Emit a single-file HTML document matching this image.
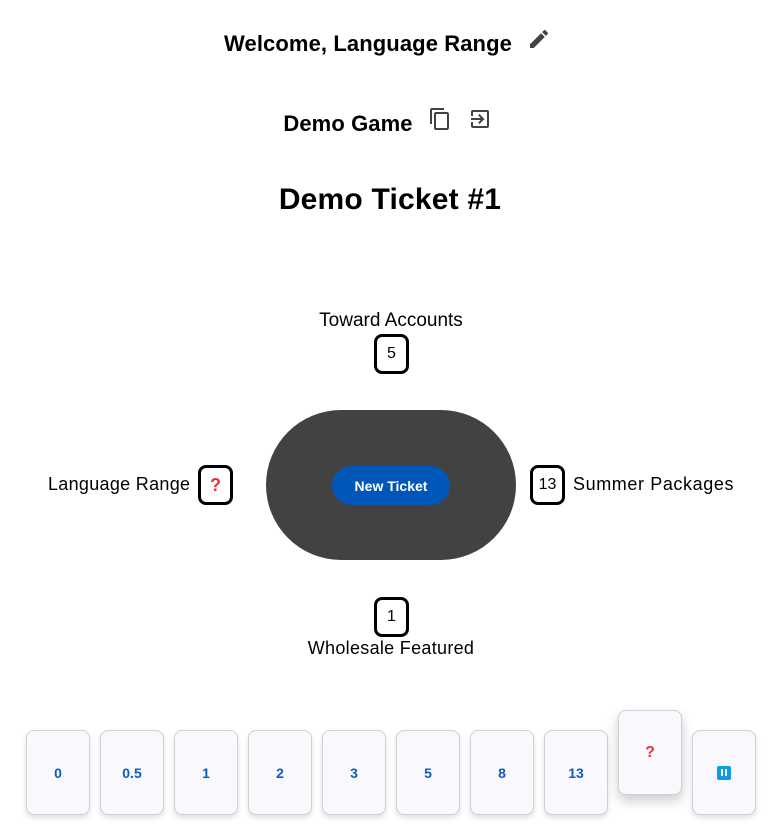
<!DOCTYPE html>
<html><head><meta charset="utf-8"><style>
*{margin:0;padding:0;box-sizing:border-box}
body{width:772px;height:827px;background:#fff;position:relative;overflow:hidden;font-family:"Liberation Sans",Arial,sans-serif;color:#000}
.a{position:absolute;white-space:nowrap}
.h{font-weight:bold;font-size:22px;letter-spacing:0.1px}
.lbl{font-size:18px;line-height:22px;letter-spacing:0.3px}
.pc{position:absolute;width:35px;height:40px;border:3px solid #000;border-radius:8px;background:#fff;display:flex;align-items:center;justify-content:center;font-size:16px}
.q{color:#f03030;font-weight:bold;font-size:18px}
.card{position:absolute;top:730px;width:64px;height:85px;border:1px solid #cfcfd4;border-radius:8px;background:#f9f9fd;box-shadow:0 3px 6px rgba(0,0,0,0.12);display:flex;align-items:center;justify-content:center;color:#0a5cc0;font-weight:bold;font-size:14px}
</style></head><body>
<div class="a h" style="left:0;width:736px;text-align:center;top:31px">Welcome, Language Range</div>
<svg class="a" style="left:527px;top:27px" width="24" height="24" viewBox="0 0 24 24"><path fill="#424242" d="M3 17.25V21h3.75L17.81 9.94l-3.75-3.75L3 17.25zM20.71 7.04a1 1 0 000-1.41l-2.34-2.34a1 1 0 00-1.41 0l-1.83 1.83 3.75 3.75 1.83-1.83z"/></svg>
<div class="a h" style="left:0;width:696px;text-align:center;top:111px">Demo Game</div>
<svg class="a" style="left:428px;top:107px" width="24" height="24" viewBox="0 0 24 24"><path fill="#424242" d="M16 1H4c-1.1 0-2 .9-2 2v14h2V3h12V1zm3 4H8c-1.1 0-2 .9-2 2v14c0 1.1.9 2 2 2h11c1.1 0 2-.9 2-2V7c0-1.1-.9-2-2-2zm0 16H8V7h11v14z"/></svg>
<svg class="a" style="left:468px;top:107px" width="24" height="24" viewBox="0 0 24 24"><path fill="#424242" d="M19 3H5a2 2 0 00-2 2v4h2V5h14v14H5v-4H3v4a2 2 0 002 2h14a2 2 0 002-2V5a2 2 0 00-2-2zm-8.92 12.58L11.5 17l5-5-5-5-1.42 1.41L12.67 11H3v2h9.67l-2.59 2.58z"/></svg>
<div class="a" style="left:0;width:780px;text-align:center;top:183px;font-weight:bold;font-size:30px;letter-spacing:0.2px">Demo Ticket #1</div>

<div class="a lbl" style="left:0;width:782px;text-align:center;top:310px;font-size:19px;letter-spacing:0">Toward Accounts</div>
<div class="pc" style="left:374px;top:334px">5</div>

<div class="a lbl" style="left:48px;top:473px">Language Range</div>
<div class="pc" style="left:198px;top:465px"><span class="q">?</span></div>

<div class="a" style="left:266px;top:410px;width:250px;height:150px;border-radius:75px;background:#424242"></div>
<div class="a" style="left:332px;top:466px;width:118px;height:39px;border-radius:20px;background:#0057b8;color:#fff;font-weight:bold;font-size:14px;display:flex;align-items:center;justify-content:center">New Ticket</div>

<div class="pc" style="left:530px;top:465px">13</div>
<div class="a lbl" style="left:573px;top:473px;letter-spacing:0.6px">Summer Packages</div>

<div class="pc" style="left:374px;top:597px">1</div>
<div class="a lbl" style="left:0;width:782px;text-align:center;top:637px">Wholesale Featured</div>

<div class="card" style="left:26px">0</div>
<div class="card" style="left:100px">0.5</div>
<div class="card" style="left:174px">1</div>
<div class="card" style="left:248px">2</div>
<div class="card" style="left:322px">3</div>
<div class="card" style="left:396px">5</div>
<div class="card" style="left:470px">8</div>
<div class="card" style="left:544px">13</div>
<div class="card" style="left:618px;top:710px;box-shadow:0 6px 12px rgba(0,0,0,0.2)"><span class="q" style="font-size:16px">?</span></div>
<div class="card" style="left:692px"><span style="display:inline-flex;width:14px;height:14px;background:#0a9de6;border-radius:2px;align-items:center;justify-content:center;gap:2px"><i style="width:2px;height:7px;background:#fff"></i><i style="width:2px;height:7px;background:#fff"></i></span></div>
</body></html>
